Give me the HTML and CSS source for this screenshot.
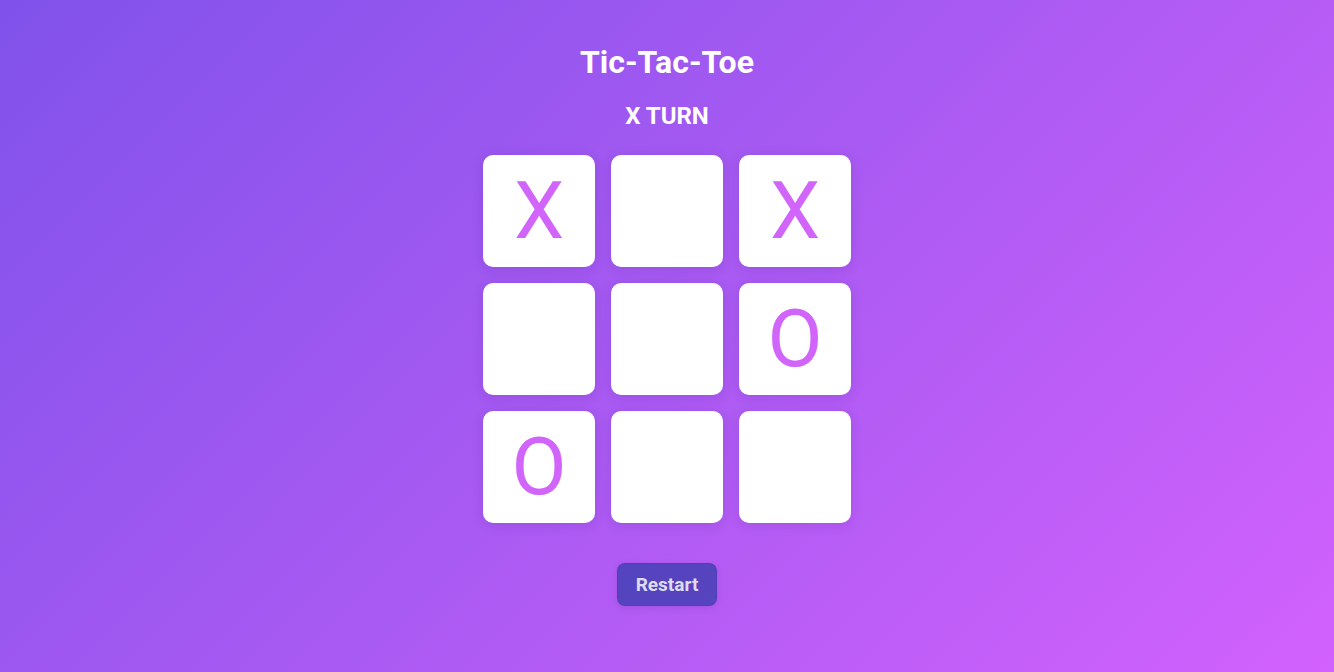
FILE: index.html
```html
<!DOCTYPE html>
<html lang="en">
<head>
<meta charset="utf-8">
<title>Tic-Tac-Toe</title>
<link rel="stylesheet" href="styles.css">
</head>
<body>
<main class="game">
  <h1 class="title">Tic-Tac-Toe</h1>
  <h2 class="status">X TURN</h2>
  <div class="board">
    <div class="cell">X</div>
    <div class="cell"></div>
    <div class="cell">X</div>
    <div class="cell"></div>
    <div class="cell"></div>
    <div class="cell">O</div>
    <div class="cell">O</div>
    <div class="cell"></div>
    <div class="cell"></div>
  </div>
  <button class="restart" type="button">Restart</button>
</main>
</body>
</html>
```
FILE: styles.css
```css
html, body {
  margin: 0;
  height: 100%;
}
body {
  font-family: Roboto, "Liberation Sans", sans-serif;
  background: linear-gradient(135deg, #8052eb 0%, #a95af2 50%, #d261fd 100%);
  color: #fff;
  min-height: 672px;
}
.game {
  display: flex;
  flex-direction: column;
  align-items: center;
  padding-top: 43px;
}
.title {
  margin: 0;
  font-size: 32px;
  line-height: 38px;
  font-weight: 700;
}
.status {
  margin: 21px 0 0;
  font-size: 24px;
  line-height: 28px;
  font-weight: 700;
}
.board {
  margin-top: 25px;
  display: grid;
  grid-template-columns: repeat(3, 112px);
  grid-auto-rows: 112px;
  gap: 16px;
}
.cell {
  background: #fff;
  border-radius: 10px;
  box-shadow: 0 2px 12px rgba(60, 20, 120, 0.15);
  display: flex;
  align-items: center;
  justify-content: center;
  font-size: 80px;
  font-weight: 400;
  color: #d164fa;
}
.restart {
  margin-top: 40px;
  width: 100px;
  height: 43px;
  border: 1px solid rgba(70, 60, 170, 0.5);
  border-radius: 8px;
  background: rgba(50, 60, 170, 0.72);
  color: #dedcf0;
  font-family: Roboto, "Liberation Sans", sans-serif;
  font-size: 19px;
  font-weight: 700;
  padding: 0;
  box-shadow: 0 2px 6px rgba(40, 20, 100, 0.12);
}
```
